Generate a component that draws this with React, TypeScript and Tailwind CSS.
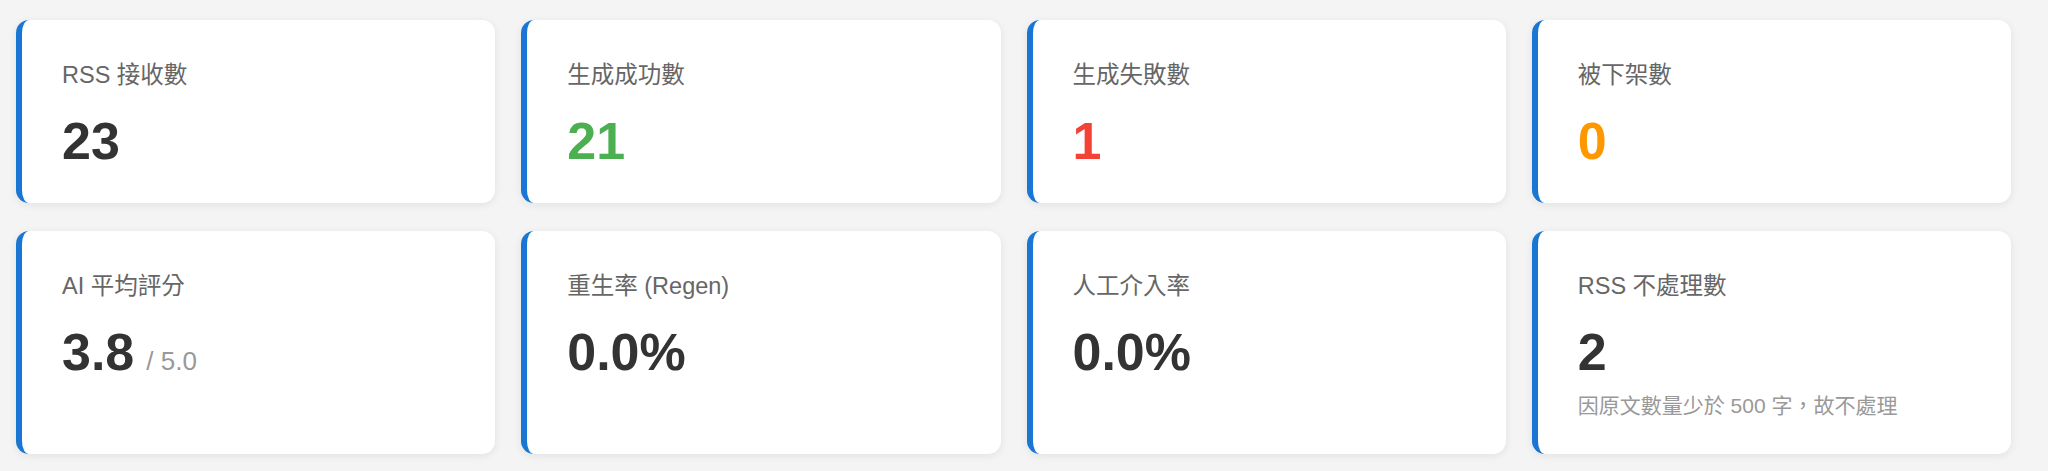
import React from 'react';

type Stat = {
  label: string;
  value: string;
  suffix?: string;
  note?: string;
  color: string;
};

const stats: Stat[] = [
  { label: 'RSS 接收數', value: '23', color: 'text-[#333333]' },
  { label: '生成成功數', value: '21', color: 'text-[#4caf50]' },
  { label: '生成失敗數', value: '1', color: 'text-[#f44336]' },
  { label: '被下架數', value: '0', color: 'text-[#ff9800]' },
  { label: 'AI 平均評分', value: '3.8', suffix: '/ 5.0', color: 'text-[#333333]' },
  { label: '重生率 (Regen)', value: '0.0%', color: 'text-[#333333]' },
  { label: '人工介入率', value: '0.0%', color: 'text-[#333333]' },
  { label: 'RSS 不處理數', value: '2', note: '因原文數量少於 500 字，故不處理', color: 'text-[#333333]' },
];

const StatCard = ({ stat }: { stat: Stat }) => (
  <div className="bg-white rounded-[13px] border-l-[6px] border-[#1976d2] shadow-[0_2px_8px_rgba(0,0,0,0.08)] pl-[40px] pr-6 pt-[42px] pb-[36px]">
    <div className="text-[23.5px] leading-[26px] text-[#666666]">{stat.label}</div>
    <div className="mt-[27px] flex items-baseline">
      <span className={`text-[52px] leading-[52px] font-bold ${stat.color}`}>{stat.value}</span>
      {stat.suffix && (
        <span className="ml-[12px] text-[26px] leading-[26px] text-[#999999]">{stat.suffix}</span>
      )}
    </div>
    {stat.note && (
      <div className="mt-[15px] text-[21px] leading-[25px] text-[#999999]">{stat.note}</div>
    )}
  </div>
);

const App = () => {
  return (
    <div className="min-h-[471px] bg-[#f4f4f4] pl-[16px] pr-[37px] pt-[20px] font-['Liberation_Sans','Noto_Sans_CJK_TC',sans-serif]">
      <div className="grid grid-cols-4 gap-x-[26px] gap-y-[28px]">
        {stats.map(stat => (
          <StatCard key={stat.label} stat={stat} />
        ))}
      </div>
    </div>
  );
};

export default App;
